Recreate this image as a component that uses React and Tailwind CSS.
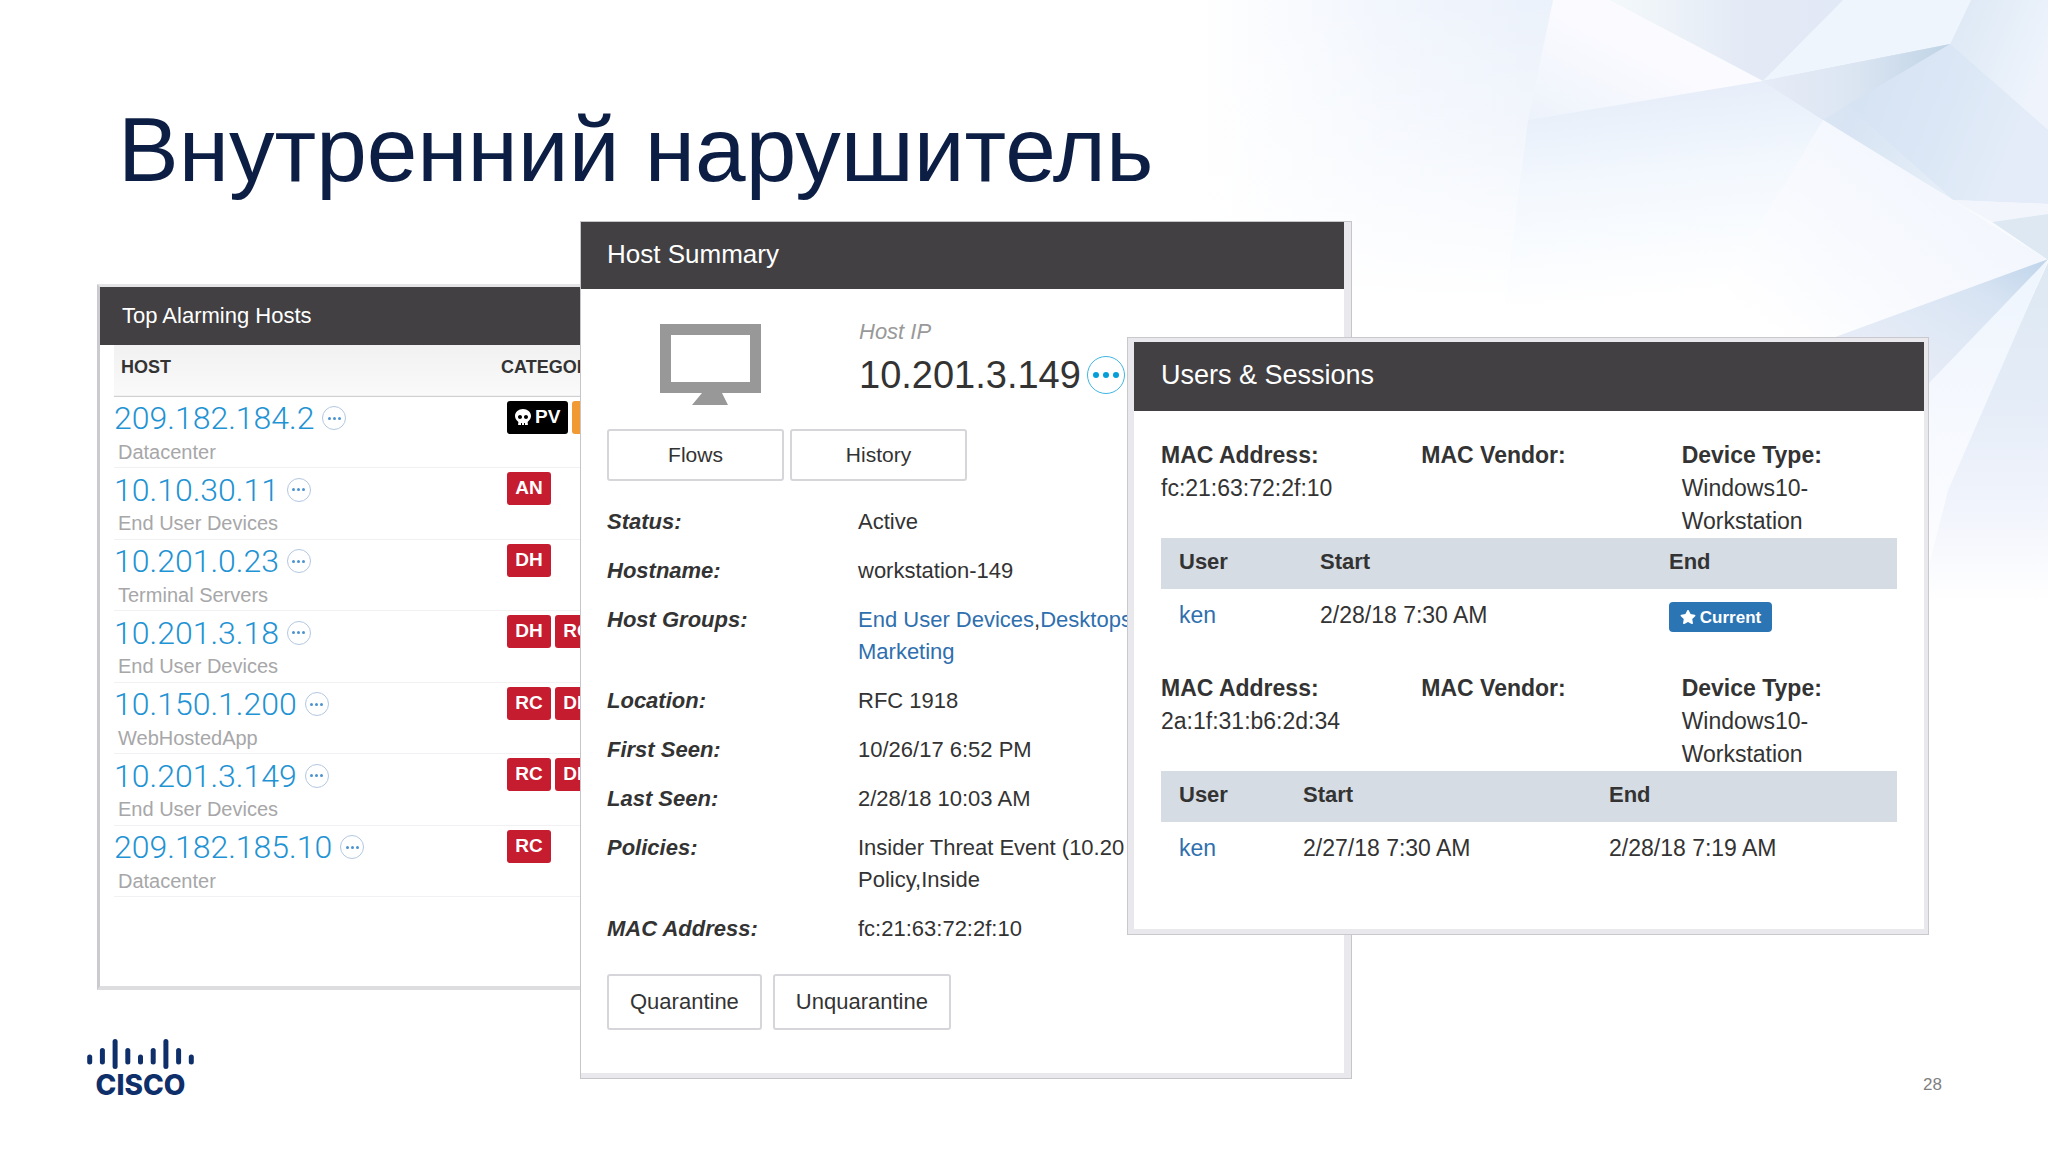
/**
 * App.jsx
 *
 * Slide with three overlapping panels:
 * - Top Alarming Hosts
 * - Host Summary
 * - Users & Sessions
 */
import { FaSkull, FaStar } from "react-icons/fa";

const ALARMING_HOSTS = [
  { ip: "209.182.184.2", group: "Datacenter", alarms: ["PV", "EX"] },
  { ip: "10.10.30.11", group: "End User Devices", alarms: ["AN"] },
  { ip: "10.201.0.23", group: "Terminal Servers", alarms: ["DH"] },
  { ip: "10.201.3.18", group: "End User Devices", alarms: ["DH", "RC"] },
  { ip: "10.150.1.200", group: "WebHostedApp", alarms: ["RC", "DH"] },
  { ip: "10.201.3.149", group: "End User Devices", alarms: ["RC", "DH"] },
  { ip: "209.182.185.10", group: "Datacenter", alarms: ["RC"] },
];

const SESSIONS = [
  {
    mac: "fc:21:63:72:2f:10",
    device: "Windows10-Workstation",
    user: "ken",
    start: "2/28/18 7:30 AM",
    end: null,
    cols: ["w-[141px]", "w-[349px]"],
  },
  {
    mac: "2a:1f:31:b6:2d:34",
    device: "Windows10-Workstation",
    user: "ken",
    start: "2/27/18 7:30 AM",
    end: "2/28/18 7:19 AM",
    cols: ["w-[124px]", "w-[306px]"],
  },
];

/* ── faceted pattern in the top right corner ── */
function Facets() {
  return (
    <svg
      viewBox="0 0 948 640"
      className="absolute top-0 right-0 w-[46.3%]"
      aria-hidden="true"
    >
      <defs>
        <linearGradient id="haze" x1="0" y1="0" x2="1" y2="0">
          <stop offset="0.1" stopColor="#fff" />
          <stop offset="0.3" stopColor="#f2f6fd" />
          <stop offset="0.45" stopColor="#ecf2fb" />
          <stop offset="1" stopColor="#eaf0fa" />
        </linearGradient>
        <linearGradient id="hazeDown" x1="0" y1="0" x2="0" y2="1">
          <stop offset="0" stopColor="#fff" stopOpacity="0" />
          <stop offset="0.5" stopColor="#fff" stopOpacity="0.4" />
          <stop offset="1" stopColor="#fff" />
        </linearGradient>
        <linearGradient id="pale" x1="0" y1="1" x2="1" y2="0">
          <stop offset="0" stopColor="#edf3fb" />
          <stop offset="0.5" stopColor="#fafaff" />
          <stop offset="1" stopColor="#fcfdff" />
        </linearGradient>
        <linearGradient id="lilac" x1="0" y1="0" x2="1" y2="0">
          <stop offset="0" stopColor="#f4f9fb" />
          <stop offset="0.6" stopColor="#e3e9f5" />
          <stop offset="1" stopColor="#e2e9f6" />
        </linearGradient>
        <linearGradient id="right" x1="0" y1="0" x2="1" y2="0.3">
          <stop offset="0" stopColor="#e3e9f5" />
          <stop offset="0.45" stopColor="#d8e4f3" />
          <stop offset="0.75" stopColor="#e2ecf7" />
          <stop offset="1" stopColor="#eff4fc" />
        </linearGradient>
        <linearGradient id="sliver" x1="0" y1="0" x2="1" y2="0">
          <stop offset="0" stopColor="#e6ecf7" />
          <stop offset="0.5" stopColor="#dbe5f2" />
          <stop offset="1" stopColor="#bfd3e5" />
        </linearGradient>
        <linearGradient id="center" x1="0.1" y1="0.2" x2="0.2" y2="0.9">
          <stop offset="0" stopColor="#e7eef9" />
          <stop offset="0.4" stopColor="#f3f8fe" />
          <stop offset="1" stopColor="#fff" />
        </linearGradient>
        <linearGradient id="kite" x1="1" y1="0" x2="0" y2="0.7">
          <stop offset="0" stopColor="#eff5fd" />
          <stop offset="0.6" stopColor="#f7f9fe" />
          <stop offset="1" stopColor="#fff" />
        </linearGradient>
        <linearGradient id="blade" x1="1" y1="0" x2="0" y2="1">
          <stop offset="0" stopColor="#bfd4ea" />
          <stop offset="0.3" stopColor="#d8e4f3" />
          <stop offset="1" stopColor="#eef1fa" />
        </linearGradient>
        <linearGradient id="ray" x1="0" y1="0" x2="0" y2="1">
          <stop offset="0" stopColor="#eef5fd" />
          <stop offset="0.7" stopColor="#fafbff" />
          <stop offset="1" stopColor="#fff" />
        </linearGradient>
        <linearGradient id="low" x1="0" y1="0" x2="0" y2="1">
          <stop offset="0" stopColor="#dde8f3" />
          <stop offset="0.35" stopColor="#e4ecf7" />
          <stop offset="0.65" stopColor="#f1f4fc" />
          <stop offset="0.9" stopColor="#fff" />
        </linearGradient>
      </defs>
      <rect width="948" height="300" fill="url(#haze)" />
      <rect width="948" height="301" fill="url(#hazeDown)" />
      <path d="M453 0H510L663 81 428 120Z" fill="url(#pale)" />
      <path d="M510 0H743L663 81Z" fill="url(#lilac)" />
      <path d="M743 0H871L850 44 663 81Z" fill="#eef5fc" />
      <path d="M428 120 663 81 850 44 747 105 723 120 600 337H400Z" fill="url(#center)" />
      <path d="M871 0H948V204L853 200 723 120 663 81 850 44Z" fill="url(#right)" />
      <path d="M663 81 850 44 747 105 723 120Z" fill="url(#sliver)" />
      <path d="M850 44 747 105 853 200 948 204V130Z" fill="#d5e2f3" opacity="0.45" />
      <path d="M853 200 948 204V214L892 222Z" fill="#f2f6fc" />
      <path d="M892 222 948 214V260Z" fill="#dde8f3" />
      <path d="M723 120 948 260 735 337H592Z" fill="url(#kite)" />
      <path d="M948 262V640H820V540Z" fill="url(#low)" />
      <path d="M948 260 820 375V600L848 490Z" fill="url(#ray)" />
      <path d="M948 259 735 337H780L828 384Z" fill="url(#blade)" />
    </svg>
  );
}

/* ── round "more" button with three dots ── */
function MoreButton({ large = false }) {
  return (
    <button
      type="button"
      aria-label="More actions"
      className={`flex shrink-0 items-center justify-center rounded-full border ${
        large
          ? "size-[38px] gap-1 border-[#3fb6e2] text-[#049fd9]"
          : "size-6 gap-[2px] border-[#b3c7e2] text-[#4b93cf]"
      }`}
    >
      {[0, 1, 2].map((i) => (
        <span key={i} className={`rounded-full bg-current ${large ? "size-[6px]" : "size-[3px]"}`} />
      ))}
    </button>
  );
}

function AlarmBadge({ code }) {
  const color = code === "PV" ? "bg-black" : code === "EX" ? "bg-[#f19a33]" : "bg-[#c61c2f]";
  return (
    <span
      className={`flex h-[33px] min-w-11 shrink-0 items-center justify-center gap-1 rounded-[3px] px-2 text-[19px] font-bold text-white ${color}`}
    >
      {code === "PV" && <FaSkull className="size-4" />}
      {code}
    </span>
  );
}

function AlarmingHosts() {
  return (
    <section className="mt-[63px] h-[706px] min-w-0 flex-[480] overflow-hidden border-t-[3px] border-b-4 border-l-[3px] border-t-[#e4e4e6] border-b-[#dddde0] border-l-[#cbcbcf] bg-white">
      <h2 className="h-[58px] bg-[#424042] pl-[22px] text-[22px] leading-[58px] text-white">
        Top Alarming Hosts
      </h2>
      <div className="pl-[14px]">
        <table className="h-[552px] w-full table-fixed text-left whitespace-nowrap">
          <thead>
            <tr className="h-[51px] border-b border-[#d0d0d2] bg-linear-to-b from-[#f1f1f2] to-[#fafafa] text-[18px] leading-6 text-[#333]">
              <th className="w-[386px] pt-[10px] pl-[7px] align-top">HOST</th>
              <th className="pt-[10px] pl-px align-top">CATEGORIES</th>
            </tr>
          </thead>
          <tbody>
            {ALARMING_HOSTS.map(({ ip, group, alarms }) => (
              <tr key={ip} className="border-b border-[#f1f1f3]">
                <td className="align-top">
                  <div className="flex h-[43px] items-center gap-2">
                    <a
                      href="#host"
                      className="font-[Roboto,sans-serif] text-[32px] leading-10 font-light text-[#1f93d3]"
                    >
                      {ip}
                    </a>
                    <MoreButton />
                  </div>
                  <p className="pl-1 text-[20px] leading-6 text-[#a7a7a9]">{group}</p>
                </td>
                <td className="pt-1 pl-[7px] align-top">
                  <div className="flex gap-1">
                    {alarms.map((code) => (
                      <AlarmBadge key={code} code={code} />
                    ))}
                  </div>
                </td>
              </tr>
            ))}
          </tbody>
        </table>
      </div>
    </section>
  );
}

function PanelButton({ className, children }) {
  return (
    <button
      type="button"
      className={`rounded-[3px] border-2 border-[#d6d5d9] bg-white text-[#333] ${className}`}
    >
      {children}
    </button>
  );
}

function SummaryRow({ label, children }) {
  return (
    <>
      <dt className="font-bold italic">{label}</dt>
      <dd className="whitespace-nowrap">{children}</dd>
    </>
  );
}

function HostSummary() {
  return (
    <section className="relative min-w-0 flex-[763] border border-[#c6c5ca] bg-[#e9e8ec] pr-[7px] pb-[5px]">
      <div className="h-full bg-white">
        <h2 className="h-[67px] bg-[#424042] pl-[26px] text-[26px] leading-[65px] text-white">
          Host Summary
        </h2>
        <div className="px-[26px] text-[22px] leading-8 text-[#333]">
          <div className="flex items-start pt-[35px]">
            <div className="w-[252px] shrink-0 pl-[53px]">
              <svg viewBox="0 0 101 81" className="w-[101px]" aria-hidden="true">
                <path
                  d="M0 0H101V69H62L68 81H32L42 69H0ZM11 11V58H90V11Z"
                  fill="#999899"
                  fillRule="evenodd"
                />
              </svg>
            </div>
            <div>
              <p className="-mt-2 text-[#999] italic">Host IP</p>
              <div className="flex items-center gap-[6px]">
                <span className="text-[38px] leading-[54px]">10.201.3.149</span>
                <MoreButton large />
              </div>
            </div>
          </div>
          <div className="flex gap-[6px] pt-6">
            <PanelButton className="h-[52px] w-[177px] text-[21px]">Flows</PanelButton>
            <PanelButton className="h-[52px] w-[177px] text-[21px]">History</PanelButton>
          </div>
          <dl className="grid grid-cols-[251px_1fr] gap-y-[17px] pt-[25px]">
            <SummaryRow label="Status:">Active</SummaryRow>
            <SummaryRow label="Hostname:">workstation-149</SummaryRow>
            <SummaryRow label="Host Groups:">
              <a href="#devices" className="text-[#2f6fae]">End User Devices</a>,
              <a href="#desktops" className="text-[#2f6fae]">Desktops</a>
              <br />
              <a href="#marketing" className="text-[#2f6fae]">Marketing</a>
            </SummaryRow>
            <SummaryRow label="Location:">RFC 1918</SummaryRow>
            <SummaryRow label="First Seen:">10/26/17 6:52 PM</SummaryRow>
            <SummaryRow label="Last Seen:">2/28/18 10:03 AM</SummaryRow>
            <SummaryRow label="Policies:">
              Insider Threat Event (10.20
              <br />
              Policy,Inside
            </SummaryRow>
            <SummaryRow label="MAC Address:">fc:21:63:72:2f:10</SummaryRow>
          </dl>
          <div className="flex gap-[11px] pt-[29px] pb-[43px]">
            <PanelButton className="h-14 px-[21px]">Quarantine</PanelButton>
            <PanelButton className="h-14 px-[21px]">Unquarantine</PanelButton>
          </div>
        </div>
      </div>
    </section>
  );
}

function Session({ mac, device, user, start, end, cols }) {
  return (
    <div>
      <dl className="grid grid-cols-3 gap-x-[45px]">
        <div>
          <dt className="font-bold">MAC Address:</dt>
          <dd>{mac}</dd>
        </div>
        <div>
          <dt className="font-bold">MAC Vendor:</dt>
          <dd />
        </div>
        <div>
          <dt className="font-bold">Device Type:</dt>
          <dd>{device}</dd>
        </div>
      </dl>
      <table className="w-full table-fixed text-left">
        <thead>
          <tr className="h-[51px] bg-[#d6dce3] text-[22px]">
            <th className={`pb-1 pl-[18px] ${cols[0]}`}>User</th>
            <th className={`pb-1 pl-[18px] ${cols[1]}`}>Start</th>
            <th className="pb-1 pl-[18px]">End</th>
          </tr>
        </thead>
        <tbody>
          <tr className="h-[53px]">
            <td className="pl-[18px]">
              <a href="#user" className="text-[#2f6fae]">{user}</a>
            </td>
            <td className="pl-[18px]">{start}</td>
            <td className="pl-[18px]">
              {end || (
                <span className="mt-[3px] flex h-[30px] w-[103px] items-center justify-center gap-1 rounded bg-[#2b75b5] text-[17px] font-bold text-white">
                  <FaStar className="size-4" />
                  Current
                </span>
              )}
            </td>
          </tr>
        </tbody>
      </table>
    </div>
  );
}

function UsersSessions() {
  return (
    <section className="relative mt-[116px] -ml-[225px] min-w-0 flex-[790] border border-[#c9c8cd] bg-[#e9e8ec] pt-1 pr-1 pb-[5px] pl-[6px]">
      <div className="bg-white">
        <h2 className="h-[69px] bg-[#424042] pl-[27px] text-[27px] leading-[67px] text-white">
          Users &amp; Sessions
        </h2>
        <div className="flex flex-col gap-[30px] px-[27px] pt-7 pb-[54px] text-[23px] leading-[33px] text-[#333]">
          {SESSIONS.map((session) => (
            <Session key={session.mac} {...session} />
          ))}
        </div>
      </div>
    </section>
  );
}

/* bar heights, left to right: short, medium, tall, medium, short ... */
const LOGO_BARS = ["s", "m", "l", "m", "s", "m", "l", "m", "s"];
const BAR_SPAN = { s: [18, 23], m: [11.5, 23], l: [2.5, 27.5] };

function Logo() {
  return (
    <div className="flex w-[107px] flex-col items-center text-[#0f2f6b]">
      <svg viewBox="0 0 107 30" className="w-full" aria-hidden="true">
        {LOGO_BARS.map((size, i) => (
          <line
            key={i}
            x1={2.7 + i * 12.7}
            x2={2.7 + i * 12.7}
            y1={BAR_SPAN[size][0]}
            y2={BAR_SPAN[size][1]}
            stroke="currentColor"
            strokeWidth="5"
            strokeLinecap="round"
          />
        ))}
      </svg>
      <span className="font-[Inter,sans-serif] text-[28px] leading-8 font-extrabold">CISCO</span>
    </div>
  );
}

export default function App() {
  return (
    <main className="relative flex min-h-screen flex-col overflow-hidden bg-white font-['Liberation_Sans',Arial,sans-serif]">
      <Facets />
      <h1 className="relative pt-[97px] pl-[118px] text-[91px] leading-[105px] text-[#0d1e45]">
        Внутренний нарушитель
      </h1>
      <div className="flex items-start pt-[19px] pr-[119px] pl-[97px]">
        <AlarmingHosts />
        <HostSummary />
        <UsersSessions />
      </div>
      <footer className="-mt-10 flex items-end justify-between pr-[106px] pb-14 pl-[87px]">
        <Logo />
        <span className="pb-1 text-[17px] leading-6 text-[#7f7f7f]">28</span>
      </footer>
    </main>
  );
}
